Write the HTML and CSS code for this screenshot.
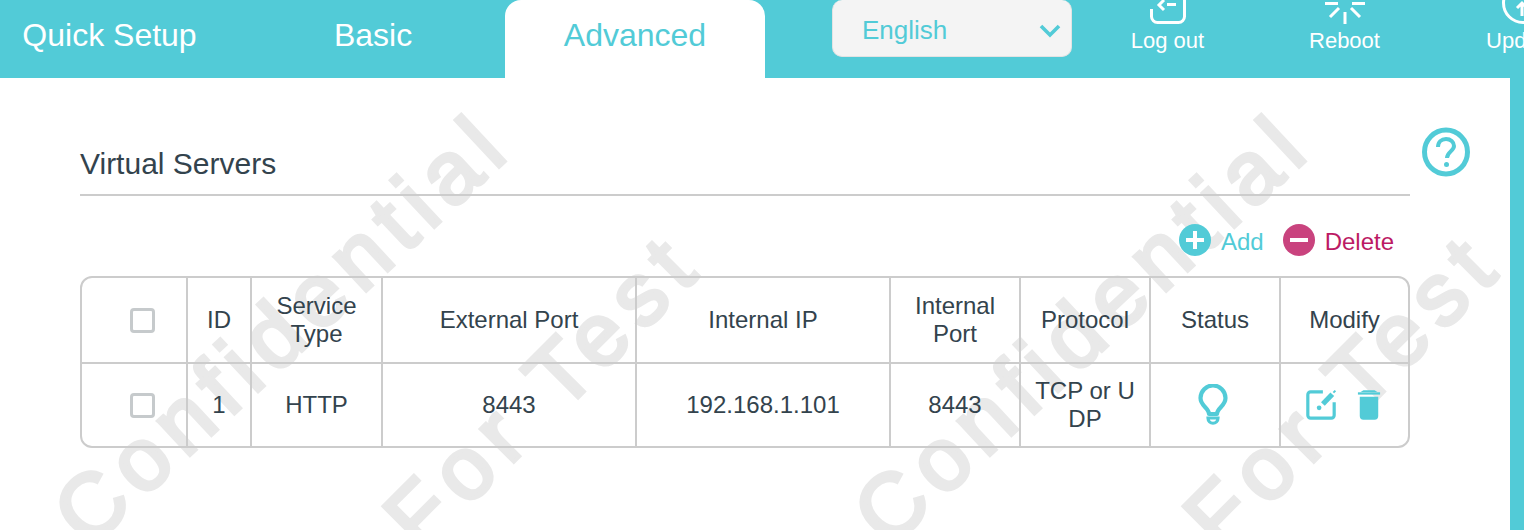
FILE: index.html
```html
<!DOCTYPE html>
<html lang="en">
<head>
<meta charset="utf-8">
<title>Virtual Servers</title>
<link rel="stylesheet" href="styles.css">
</head>
<body>
<header class="top">
  <nav class="tabs">
    <a class="tab tab-quick">Quick Setup</a>
    <a class="tab tab-basic">Basic</a>
    <a class="tab tab-adv">Advanced</a>
  </nav>
  <div class="lang">
    <span>English</span>
    <svg class="chev" viewBox="0 0 22 14" width="22" height="14"><path d="M2 2l9 9 9-9" fill="none" stroke="#52cbd7" stroke-width="3.600"/></svg>
  </div>
  <div class="actions">
    <div class="action">
      <svg viewBox="0 0 36 24" width="36" height="24"><path d="M1.500 9v7.500a6 6 0 0 0 6 6h21a6 6 0 0 0 6-6V0" fill="none" stroke="#fff" stroke-width="3"/><path d="M14 0L9 5l5 5" fill="none" stroke="#fff" stroke-width="3"/><path d="M17 4.500h9" stroke="#fff" stroke-width="3"/></svg>
      <span>Log out</span>
    </div>
    <div class="action">
      <svg viewBox="0 0 44 24" width="44" height="24"><path d="M2 3.500h13M29 3.500h13M22 12v12M7 17l9-9M28 8l9 9" stroke="#fff" stroke-width="3" fill="none"/></svg>
      <span>Reboot</span>
    </div>
    <div class="action">
      <svg viewBox="0 0 44 24" width="44" height="24"><circle cx="23" cy="3" r="19.500" fill="none" stroke="#fff" stroke-width="3"/><path d="M22 5v11M17 8l5-5 5 5" fill="none" stroke="#fff" stroke-width="3"/></svg>
      <span>Update</span>
    </div>
  </div>
</header>
<main class="main">
  <div class="wm wm-c1">Confidential</div>
  <div class="wm wm-t wm-t1">For Test</div>
  <div class="wm wm-c2">Confidential</div>
  <div class="wm wm-t wm-t2">For Test</div>
  <section class="content">
    <div class="title-row">
      <h1>Virtual Servers</h1>
      <svg class="help" viewBox="0 0 48 50" width="48" height="50"><ellipse cx="24" cy="25" rx="21.500" ry="22" fill="none" stroke="#52cbd7" stroke-width="5"/><path d="M16 20c0-5 3.500-8 8-8s8 3 8 7c0 5-7 6-7 12" fill="none" stroke="#52cbd7" stroke-width="4"/><circle cx="24.500" cy="37.500" r="2.500" fill="#52cbd7"/></svg>
    </div>
    <div class="toolbar">
      <a class="tool add"><svg viewBox="0 0 32 32" width="32" height="32"><circle cx="16" cy="16" r="16" fill="#52cbd7"/><path d="M16 7v18M7 16h18" stroke="#fff" stroke-width="4"/></svg>Add</a>
      <a class="tool del"><svg viewBox="0 0 32 32" width="32" height="32"><circle cx="16" cy="16" r="16" fill="#c9437e"/><path d="M7 16h18" stroke="#fff" stroke-width="4"/></svg>Delete</a>
    </div>
    <div class="table">
      <div class="cell cell-check"><i class="check"></i></div>
      <div class="cell">ID</div>
      <div class="cell">Service<br>Type</div>
      <div class="cell">External Port</div>
      <div class="cell">Internal IP</div>
      <div class="cell">Internal<br>Port</div>
      <div class="cell">Protocol</div>
      <div class="cell">Status</div>
      <div class="cell">Modify</div>
      <div class="cell body cell-check"><i class="check"></i></div>
      <div class="cell body">1</div>
      <div class="cell body">HTTP</div>
      <div class="cell body">8443</div>
      <div class="cell body">192.168.1.101</div>
      <div class="cell body">8443</div>
      <div class="cell body">TCP or U<br>DP</div>
      <div class="cell body cell-bulb"><svg viewBox="0 0 30 42" width="30" height="42"><path d="M11 30c0-6-8.500-8-8.500-16a12.500 12.500 0 0 1 25 0c0 8-8.500 10-8.500 16z" fill="none" stroke="#52cbd7" stroke-width="4.200" stroke-linejoin="round"/><path d="M10 34c0 7 10 7 10 0z" fill="none" stroke="#52cbd7" stroke-width="3.200"/></svg></div>
      <div class="cell body icons">
        <svg viewBox="0 0 34 34" width="32" height="32"><path d="M19 3H6a3 3 0 0 0-3 3v22a3 3 0 0 0 3 3h22a3 3 0 0 0 3-3V14" fill="none" stroke="#52cbd7" stroke-width="3.400"/><path d="M19 16L29 5.500" stroke="#52cbd7" stroke-width="5.500" fill="none"/><path d="M30.500 2l1.500 1.500" stroke="#52cbd7" stroke-width="3" fill="none"/><circle cx="15" cy="20" r="2.500" fill="#52cbd7"/></svg>
        <svg viewBox="0 0 26 34" width="24" height="32"><path d="M1 4.500h24" stroke="#52cbd7" stroke-width="2.500"/><path d="M4 3l3-2h12l3 2z" fill="#52cbd7"/><path d="M3 8h20v21a4 4 0 0 1-4 4H7a4 4 0 0 1-4-4z" fill="#52cbd7"/></svg>
      </div>
    </div>
  </section>
</main>
</body>
</html>
```
FILE: styles.css
```css
* { box-sizing: border-box; }
html, body { margin: 0; height: 100%; overflow: hidden; }
body {
  background: #52cbd7;
  font-family: "Liberation Sans", Arial, sans-serif;
  color: #33434d;
  width: 1524px;
  height: 530px;
  display: flex;
  flex-direction: column;
}
.top {
  height: 78px;
  flex: none;
  display: flex;
  align-items: flex-start;
  overflow: hidden;
}
.tabs { display: flex; height: 78px; width: 765px; flex: none; }
.tab {
  display: flex;
  align-items: center;
  justify-content: center;
  font-size: 32px;
  color: #fff;
  padding-bottom: 8px;
}
.tab-quick { width: 219px; }
.tab-basic { width: 286px; padding-left: 22px; }
.tab-adv {
  width: 260px;
  background: #fff;
  color: #52cbd7;
  border-radius: 16px 16px 0 0;
}
.lang {
  width: 240px;
  height: 57px;
  margin-left: 67px;
  flex: none;
  background: #f4f4f4;
  border: 1px solid #e3e3e3;
  border-top: 0;
  border-radius: 10px;
  display: flex;
  align-items: center;
  justify-content: space-between;
  padding: 5px 10px 0 29px;
  font-size: 26px;
  color: #52cbd7;
}
.actions { display: flex; margin-left: 7px; flex: none; }
.action {
  width: 177px;
  display: flex;
  flex-direction: column;
  align-items: center;
  color: #fff;
  font-size: 22px;
  line-height: 26px;
  gap: 4px;
}
.action svg { display: block; flex: none; }
.main {
  flex: 1;
  margin-right: 14px;
  background: #fff;
  position: relative;
  overflow: hidden;
  min-height: 0;
}
.wm {
  position: absolute;
  font-family: "Liberation Sans", Arial, sans-serif;
  font-size: 88px;
  font-weight: 400;
  letter-spacing: 10px;
  color: #e9e9e9;
  -webkit-text-stroke: 4px #e9e9e9;
  white-space: nowrap;
  line-height: 1;
  transform: translate(-50%, -50%) rotate(-43deg);
}
.wm-t { letter-spacing: 11px; transform: translate(-50%, -50%) rotate(-45deg); }
.wm-c1 { left: 282px; top: 250px; }
.wm-t1 { left: 543px; top: 312px; }
.wm-c2 { left: 1082px; top: 250px; }
.wm-t2 { left: 1343px; top: 312px; }
.content { position: relative; padding: 0 0 0 80px; }
.title-row {
  width: 1330px;
  height: 118px;
  border-bottom: 2px solid #cccccc;
  position: relative;
}
h1 {
  margin: 0;
  padding-top: 70px;
  font-size: 30px;
  line-height: 32px;
  font-weight: 400;
}
.help { position: absolute; left: 1342px; top: 49px; }
.toolbar {
  width: 1330px;
  height: 80px;
  display: flex;
  justify-content: flex-end;
  align-items: flex-start;
  gap: 19px;
  padding: 28px 16px 0 0;
}
.tool { display: flex; align-items: center; gap: 10px; font-size: 24px; height: 32px; padding-top: 3px; }
.tool svg { margin-top: -3px; }
.tool.add { color: #52cbd7; }
.tool.del { color: #bc1a64; }
.table {
  width: 1330px;
  display: grid;
  grid-template-columns: 106px 64px 131px 254px 254px 130px 130px 130px 1fr;
  grid-template-rows: 86px 82px;
  border: 2px solid #cccccc;
  border-radius: 12px;
}
.cell {
  display: flex;
  align-items: center;
  justify-content: center;
  text-align: center;
  font-size: 24px;
  line-height: 28px;
  border-right: 2px solid #cccccc;
  border-bottom: 2px solid #cccccc;
}
.cell:nth-child(9n) { border-right: 0; }
.cell.body { border-bottom: 0; }
.cell-check { padding-left: 16px; }
.cell-bulb { padding-right: 4px; }
.check {
  width: 25px;
  height: 25px;
  border: 3px solid #c6cacc;
  border-radius: 4px;
  display: block;
}
.icons { gap: 20px; padding-right: 3px; }
```
